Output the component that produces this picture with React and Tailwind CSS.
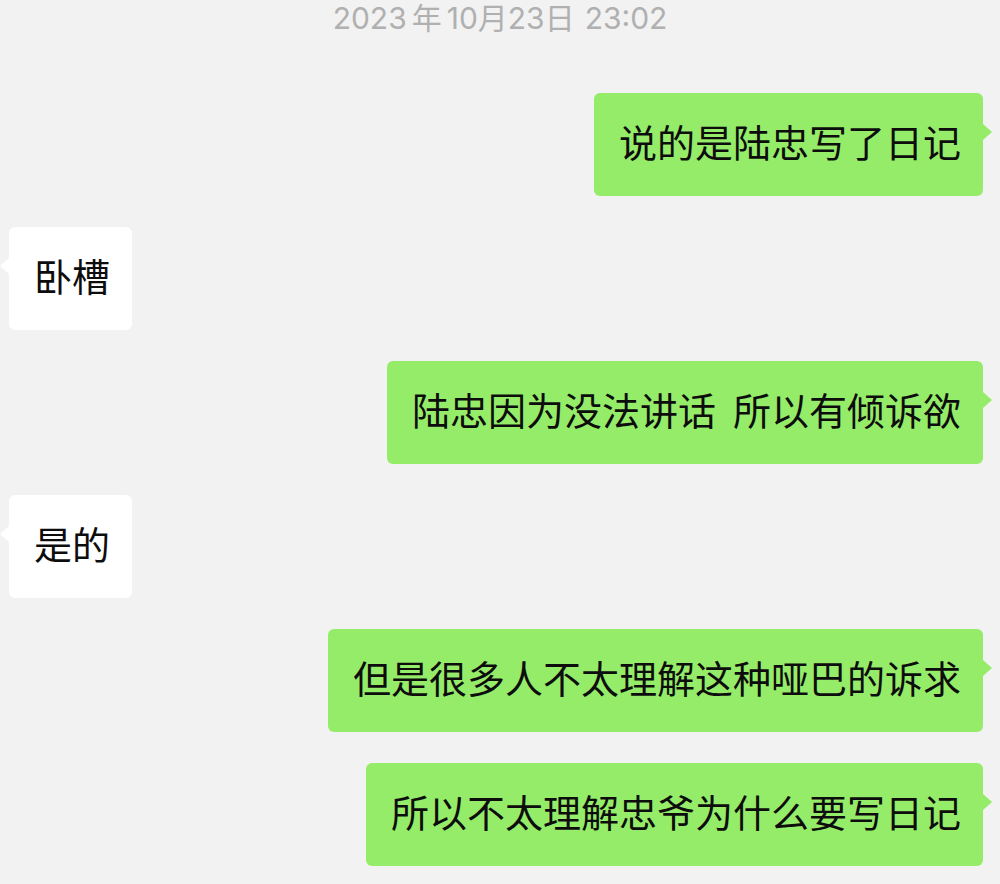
import React from "react";

const MESSAGES = [
  { side: "right", text: "说的是陆忠写了日记" },
  { side: "left", text: "卧槽" },
  { side: "right", text: "陆忠因为没法讲话  所以有倾诉欲" },
  { side: "left", text: "是的" },
  { side: "right", text: "但是很多人不太理解这种哑巴的诉求" },
  { side: "right", text: "所以不太理解忠爷为什么要写日记" },
];

function Bubble({ side, text }) {
  const mine = side === "right";
  return (
    <div className={mine ? "flex justify-end pr-[17px]" : "flex justify-start pl-[9px]"}>
      <div
        className={
          "relative flex h-[103px] items-center rounded-[6px] pl-[25px] pr-[22px] pb-[8px] text-[38px] leading-none text-[#0d0d0d] whitespace-pre " +
          (mine ? "bg-[#95ec69]" : "bg-white")
        }
      >
        {text}
        {mine ? (
          <span className="absolute right-[-9px] top-[31px] h-0 w-0 border-y-[8px] border-l-[9px] border-y-transparent border-l-[#95ec69]" />
        ) : (
          <span className="absolute left-[-9px] top-[31px] h-0 w-0 border-y-[8px] border-r-[9px] border-y-transparent border-r-white" />
        )}
      </div>
    </div>
  );
}

export default function App() {
  return (
    <div
      className="flex h-[884px] w-[1000px] flex-col overflow-hidden bg-[#f2f2f2]"
      style={{ fontFamily: '"Noto Sans CJK SC", "Noto Sans", sans-serif' }}
    >
      <div
        className="flex h-[40px] items-start justify-center pt-[1px] text-[30px] leading-[34px] text-[#b0b0b0]"
        style={{ fontFamily: 'Inter, "Noto Sans CJK SC", sans-serif' }}
      >
        <span>2023</span>
        <span className="mx-[5px]">年</span>
        <span>10</span>
        <span>月</span>
        <span>23</span>
        <span>日</span>
        <span className="ml-[10px]">23:02</span>
      </div>
      <div className="mt-[53px] flex flex-col gap-[31px]">
        {MESSAGES.map((m, i) => (
          <Bubble key={i} {...m} />
        ))}
      </div>
    </div>
  );
}
